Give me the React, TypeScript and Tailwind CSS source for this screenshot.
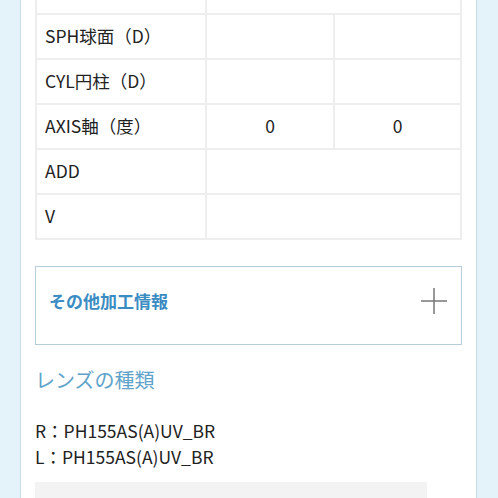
const rows = [
    { label: "瞳孔間距離PD", r: "", l: "", span: true },
    { label: "SPH球面（D）", r: "", l: "" },
    { label: "CYL円柱（D）", r: "", l: "" },
    { label: "AXIS軸（度）", r: "0", l: "0" },
    { label: "ADD", r: "", l: "", span: true },
    { label: "V", r: "", l: "", span: true },
]

const Table = () => {
    return (
        <div className="-mt-[32px] border-2 border-[#eeeeee] border-t-0">
            {rows.map((row, i) => (
                <div key={i} className="flex h-[45px] border-t-2 border-[#eeeeee] first:border-t-0">
                    <div className="w-[168px] flex items-center pl-[8px] text-[17.5px] text-[#222] whitespace-nowrap">{row.label}</div>
                    {row.span ? (
                        <div className="flex-1 border-l-2 border-[#eeeeee]"></div>
                    ) : (
                        <>
                            <div className="w-[128px] flex items-center justify-center border-l-2 border-[#eeeeee] text-[17.5px] text-[#222]">{row.r}</div>
                            <div className="flex-1 flex items-center justify-center border-l-2 border-[#eeeeee] text-[17.5px] text-[#222]">{row.l}</div>
                        </>
                    )}
                </div>
            ))}
        </div>
    )
}

export default function App() {
    return (
        <div className="w-[498px] h-[498px] overflow-hidden bg-[#e4f2fa] pl-[20px] pr-[21px]" style={{ fontFamily: '"Noto Sans CJK JP", "Noto Sans", sans-serif' }}>
            <div className="h-full overflow-hidden bg-white border-x border-[#c5dbe7] px-[14px]">
                <Table />
                <div className="mt-[26px] h-[79px] border border-[#b7cdd9] flex items-center justify-between pl-[13px] pr-[13px] pb-[9px]">
                    <span className="text-[17px] font-bold text-[#3a8cc2]">その他加工情報</span>
                    <svg width="28" height="28" viewBox="0 0 28 28" className="text-[#777]">
                        <path d="M14 1V27M1 14H27" stroke="currentColor" strokeWidth="1.5" fill="none" />
                    </svg>
                </div>
                <h3 className="mt-[20px] text-[20px] leading-[30px] text-[#5fa3ca]">レンズの種類</h3>
                <div className="mt-[23px] text-[17.5px] leading-[26px] text-[#222]">
                    <p>R：PH155AS(A)UV_BR</p>
                    <p>L：PH155AS(A)UV_BR</p>
                </div>
                <div className="mt-[12px] w-[392px] h-[40px] bg-[#f3f3f3]"></div>
            </div>
        </div>
    )
}
